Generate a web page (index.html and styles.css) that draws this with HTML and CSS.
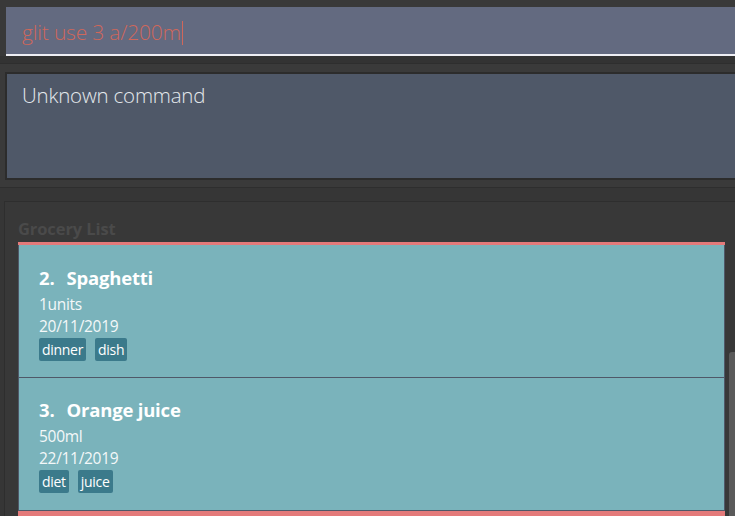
FILE: index.html
```html
<!DOCTYPE html>
<html>
<head>
<meta charset="utf-8">
<link rel="stylesheet" href="styles.css">
</head>
<body>
<div class="app">
  <div class="command-section">
    <div class="command-input"><span class="command-text">glit use 3 a/200m</span><span class="caret"></span></div>
  </div>
  <div class="result-section">
    <div class="result-box">Unknown command</div>
  </div>
  <div class="list-section">
    <div class="list-panel">
      <div class="list-title">Grocery List</div>
      <div class="list-view">
        <div class="card">
          <div class="card-title"><span class="idx">2.</span>Spaghetti</div>
          <div class="card-line first">1units</div>
          <div class="card-line">20/11/2019</div>
          <div class="tags"><span class="tag">dinner</span><span class="tag">dish</span></div>
        </div>
        <div class="card">
          <div class="card-title"><span class="idx">3.</span>Orange juice</div>
          <div class="card-line first">500ml</div>
          <div class="card-line">22/11/2019</div>
          <div class="tags"><span class="tag">diet</span><span class="tag">juice</span></div>
        </div>
        <div class="card-next"></div>
      </div>
      <div class="scrollbar"><div class="thumb"></div></div>
    </div>
  </div>
</div>
</body>
</html>
```
FILE: styles.css
```css
html, body {
  margin: 0;
  padding: 0;
  background: #383838;
  width: 735px;
  height: 516px;
  overflow: hidden;
  font-family: "Open Sans", "Noto Sans", sans-serif;
}
.app {
  display: flex;
  flex-direction: column;
  height: 516px;
}
.command-section {
  flex-shrink: 0;
  padding: 7px 0 0 6px;
  height: 64px;
  box-sizing: border-box;
  border-bottom: 1px solid #2e2e2e;
  background: linear-gradient(#393939 0 56px, #333333 56px);
}
.command-input {
  height: 47px;
  background: #636a80;
  border-bottom: 2px solid #eeeef4;
  display: flex;
  align-items: center;
  padding-left: 16px;
}
.command-text {
  color: #d0675b;
  font-size: 21px;
  font-weight: 300;
  letter-spacing: -0.2px;
  line-height: 1;
  margin-top: 4px;
}
.caret {
  display: inline-block;
  width: 1px;
  height: 24px;
  background: #d0675b;
  margin-left: 1px;
  margin-top: 4px;
}
.result-section {
  flex-shrink: 0;
  background: #3a3a3a;
  padding: 8px 0 0 5px;
  height: 124px;
  box-sizing: border-box;
  border-bottom: 1px solid #2e2e2e;
}
.result-box {
  height: 108px;
  box-sizing: border-box;
  background: #4f5868;
  border: 2px solid #2c2c2c;
  border-right: none;
  color: #e4e8ec;
  font-size: 20.5px;
  font-weight: 300;
  padding: 9px 0 0 15px;
  letter-spacing: -0.2px;
  line-height: 24px;
}
.list-section {
  flex: 1;
  min-height: 0;
  overflow: hidden;
  padding: 13px 0 0 4px;
  background: #363636;
}
.list-panel {
  position: relative;
  height: 100%;
  box-sizing: border-box;
  border-top: 1px solid #2e2e2e;
  border-left: 1px solid #2e2e2e;
  background: #383838;
  padding: 16px 0 0 13px;
  overflow: hidden;
}
.list-title {
  color: #4a4a4a;
  font-weight: 700;
  font-size: 16.5px;
  line-height: 22px;
  height: 24px;
  letter-spacing: -0.1px;
}
.list-view {
  width: 707px;
  border-top: 3px solid #e47a7a;
}
.card {
  background: #7ab3bb;
  border: 1px solid #4f5868;
  border-top: none;
  height: 133px;
  box-sizing: border-box;
  padding: 20px 0 0 20px;
  color: #ffffff;
}
.card + .card {
  padding-top: 19px;
}
.card-title {
  font-weight: 700;
  font-size: 18.5px;
  line-height: 26px;
  letter-spacing: -0.2px;
}
.idx {
  margin-right: 12px;
}
.card-line {
  font-size: 15.5px;
  line-height: 22px;
  color: #f4f8f9;
  letter-spacing: -0.3px;
}
.card-line.first {
  margin-top: 2px;
}
.tags {
  display: flex;
  gap: 9px;
  margin-top: 1px;
}
.tag {
  background: #3b7a8b;
  color: #ffffff;
  font-size: 14px;
  line-height: 21px;
  padding: 1px 3px;
  border-radius: 2px;
  letter-spacing: -0.3px;
}
.card-next {
  height: 10px;
  background: #e47a7a;
}
.scrollbar {
  position: absolute;
  left: 720px;
  top: 0;
  width: 10px;
  bottom: 0;
  background: #383838;
}
.thumb {
  position: absolute;
  left: 4px;
  right: 0;
  top: 150px;
  bottom: 0;
  background: #5a5a5a;
  border-radius: 3px 0 0 0;
}
```
